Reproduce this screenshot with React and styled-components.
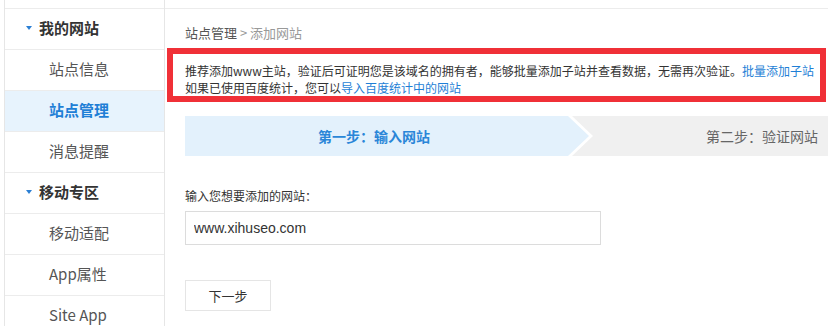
import React from "react";
import styled, { createGlobalStyle } from "styled-components";

const GlobalStyle = createGlobalStyle`
  body {
    margin: 0;
    background: #fff;
    font-family: "Noto Sans CJK SC", "Liberation Sans", sans-serif;
    color: #333;
  }
`;

const Page = styled.div`
  display: flex;
  width: 828px;
  height: 326px;
  overflow: hidden;
  padding-left: 4px;
  box-sizing: border-box;
`;

const Sidebar = styled.div`
  width: 159px;
  flex-shrink: 0;
  border-left: 1px solid #e6e6e6;
  border-right: 1px solid #e6e6e6;
  padding-top: 8px;
`;

const NavList = styled.div`
  border-top: 1px solid #ececec;
`;

const NavRow = styled.div`
  height: 40px;
  box-sizing: border-box;
  padding-bottom: 3px;
  border-bottom: 1px solid #ececec;
  display: flex;
  align-items: center;
  padding-left: ${(p) => (p.$group ? "21px" : "44px")};
  font-size: 15px;
  font-weight: ${(p) => (p.$group || p.$active ? 700 : 400)};
  color: ${(p) => (p.$active ? "#1f7fd6" : p.$group ? "#333" : "#555")};
  background: ${(p) => (p.$active ? "#e7f3fd" : "transparent")};
  height: 41px;
`;

const Caret = styled.span`
  width: 0;
  height: 0;
  border-left: 3.5px solid transparent;
  border-right: 3.5px solid transparent;
  border-top: 4px solid #2b7fd4;
  margin-right: 7px;
`;

const Main = styled.div`
  flex: 1;
  margin-top: 8px;
  border-top: 1px solid #ececec;
  min-width: 0;
`;

const Breadcrumb = styled.div`
  padding: 15px 0 0 20px;
  height: 24px;
  font-size: 13px;
  color: #555;
  line-height: 18px;

  span {
    color: #999;
  }
`;

const Notice = styled.div`
  margin: 0 2px;
  border: 6px solid #f03037;
  height: 34px;
  overflow: hidden;
  padding: 8px 0 0 12px;
  box-sizing: content-box;
  font-size: 12px;
  line-height: 17px;
  color: #333;
  white-space: nowrap;
`;

const Link = styled.a`
  color: #1f7fd6;
  text-decoration: none;
`;

const Steps = styled.div`
  display: flex;
  margin: 14px 0 0 20px;
  height: 40px;
  background: #f0f0f0;
`;

const StepOne = styled.div`
  width: 408px;
  flex-shrink: 0;
  background: #fff;
  clip-path: polygon(0 0, calc(100% - 21px) 0, 100% 50%, calc(100% - 21px) 100%, 0 100%);
  display: flex;
`;

const StepOneInner = styled.div`
  width: 404px;
  background: #e3f1fc;
  clip-path: polygon(0 0, calc(100% - 21px) 0, 100% 50%, calc(100% - 21px) 100%, 0 100%);
  display: flex;
  align-items: center;
  padding-left: 133px;
  box-sizing: border-box;
  font-size: 14px;
  font-weight: 700;
  color: #2a86d8;
`;

const StepTwo = styled.div`
  flex: 1;
  display: flex;
  align-items: center;
  padding-left: 113px;
  font-size: 14px;
  color: #666;
  white-space: nowrap;
`;

const Form = styled.div`
  padding: 31px 0 0 20px;
`;

const Label = styled.div`
  font-size: 12px;
  line-height: 17px;
  color: #333;
`;

const Input = styled.input`
  display: block;
  margin-top: 7px;
  width: 416px;
  height: 34px;
  box-sizing: border-box;
  border: 1px solid #dcdcdc;
  padding: 0 8px;
  font-family: "Liberation Sans", sans-serif;
  font-size: 14px;
  color: #333;
  outline: none;
`;

const Button = styled.button`
  display: block;
  margin-top: 35px;
  width: 86px;
  height: 31px;
  background: #fff;
  border: 1px solid #e5e5e5;
  font-family: "Noto Sans CJK SC", sans-serif;
  font-size: 13px;
  color: #333;
  cursor: pointer;
`;

const navItems = [
  { label: "我的网站", group: true },
  { label: "站点信息" },
  { label: "站点管理", active: true },
  { label: "消息提醒" },
  { label: "移动专区", group: true },
  { label: "移动适配" },
  { label: "App属性" },
  { label: "Site App" },
];

export default function App() {
  return (
    <>
      <GlobalStyle />
      <Page>
        <Sidebar>
          <NavList>
            {navItems.map((item) => (
              <NavRow key={item.label} $group={item.group} $active={item.active}>
                {item.group && <Caret />}
                {item.label}
              </NavRow>
            ))}
          </NavList>
        </Sidebar>
        <Main>
          <Breadcrumb>
            站点管理 <span>&gt; 添加网站</span>
          </Breadcrumb>
          <Notice>
            推荐添加www主站，验证后可证明您是该域名的拥有者，能够批量添加子站并查看数据，无需再次验证。
            <Link href="#">批量添加子站</Link>
            <br />
            如果已使用百度统计，您可以<Link href="#">导入百度统计中的网站</Link>
          </Notice>
          <Steps>
            <StepOne>
              <StepOneInner>第一步：输入网站</StepOneInner>
            </StepOne>
            <StepTwo>第二步：验证网站</StepTwo>
          </Steps>
          <Form>
            <Label>输入您想要添加的网站：</Label>
            <Input defaultValue="www.xihuseo.com" />
            <Button>下一步</Button>
          </Form>
        </Main>
      </Page>
    </>
  );
}
